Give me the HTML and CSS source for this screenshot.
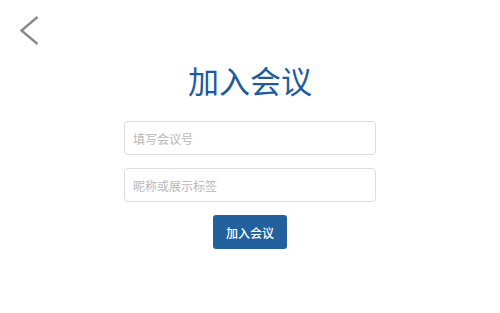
FILE: index.html
```html
<!DOCTYPE html>
<html lang="zh-CN">
<head>
<meta charset="utf-8">
<title>加入会议</title>
<link rel="stylesheet" href="styles.css">
</head>
<body>
<div class="page">
  <div class="topbar">
    <a class="back" href="#" aria-label="返回">
      <svg width="50" height="60" viewBox="0 0 50 60"><path d="M37.5 17 L21.5 30.5 L37.5 44" fill="none" stroke="#8a8a8a" stroke-width="2.4" stroke-linecap="butt" stroke-linejoin="miter"/></svg>
    </a>
  </div>
  <h1 class="title">加入会议</h1>
  <form class="form">
    <input class="field" type="text" placeholder="填写会议号">
    <input class="field" type="text" placeholder="昵称或展示标签">
    <button class="btn" type="button">加入会议</button>
  </form>
</div>
</body>
</html>
```

FILE: styles.css
```css
html, body {
  margin: 0;
  padding: 0;
  background: #ffffff;
}
body {
  font-family: "Noto Sans CJK SC", "Noto Sans", sans-serif;
  width: 500px;
  height: 313px;
  overflow: hidden;
}
.page {
  display: flex;
  flex-direction: column;
  align-items: stretch;
}
.topbar {
  height: 60px;
  display: flex;
}
.back {
  display: block;
  width: 50px;
  height: 60px;
}
.back svg {
  display: block;
}
.title {
  margin: 0;
  height: 40px;
  line-height: 40px;
  font-size: 31px;
  font-weight: 400;
  color: #1c5c9d;
  text-align: center;
}
.form {
  width: 252px;
  margin: 21px auto 0;
  display: flex;
  flex-direction: column;
  align-items: center;
  gap: 13px;
}
.field {
  width: 252px;
  height: 34px;
  box-sizing: border-box;
  border: 1px solid #dcdcdc;
  border-radius: 4px;
  padding: 0 8px;
  font-family: inherit;
  font-size: 12px;
  color: #333;
  outline: none;
  background: #fff;
}
.field::placeholder {
  color: #b8b8b8;
}
.btn {
  width: 74px;
  height: 34px;
  border: none;
  border-radius: 3px;
  background: #22609e;
  color: #ffffff;
  font-family: inherit;
  font-size: 12px;
  font-weight: 500;
  padding: 0;
  cursor: pointer;
}
```
